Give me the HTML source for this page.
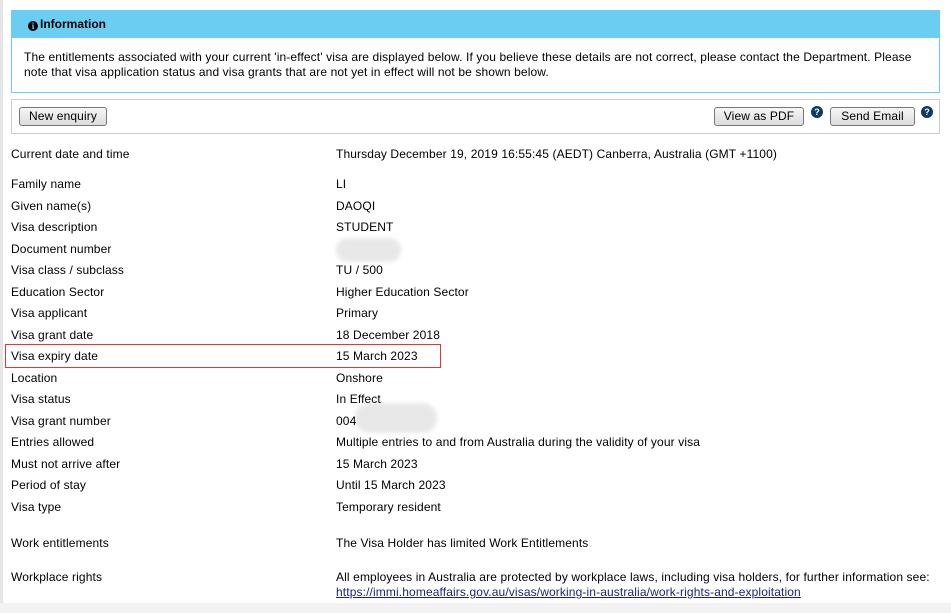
<!DOCTYPE html>
<html><head><meta charset="utf-8"><style>
*{margin:0;padding:0;box-sizing:border-box}
body{width:951px;height:613px;background:#fff;position:relative;overflow:hidden;font-family:"Liberation Sans",Arial,sans-serif;font-size:12px;color:#000;letter-spacing:0.12px}
.strip{position:absolute;left:0;top:0;width:3px;height:613px;background:#e6e6e6}
.bot{position:absolute;left:0;top:603px;width:951px;height:10px;background:#f2f2f2}
.info{position:absolute;left:11px;top:10px;width:929px;height:83px;border:1px solid #6ccdf3}
.ih{background:#6ccdf3;height:27px;font-weight:bold;padding:6px 0 0 16px;font-size:12px;letter-spacing:0}
.ih .i{display:inline-block;width:10px;height:10px;border-radius:50%;background:#000;color:#6ccdf3;font-size:9px;text-align:center;line-height:10px;font-family:"Liberation Serif",serif;margin-right:2px;vertical-align:-1px}
.ib{padding:12px 0 0 12px;line-height:15px}
.tb{position:absolute;left:11px;top:99px;width:929px;height:35px;border:1px solid #ccc}
.btn{position:absolute;top:107px;height:19px;border:1px solid #777;border-radius:3px;background:linear-gradient(#f6f6f6,#dcdcdc);text-align:center;line-height:16px;font-size:12px}
.q{position:absolute;top:106px;width:12px;height:12px;border-radius:50%;background:#0b3a66;color:#fff;font-size:9px;font-weight:bold;text-align:center;line-height:12px}
.l{position:absolute;left:11px}
.v{position:absolute;left:336px}
.red{position:absolute;left:5px;top:344px;width:436px;height:24px;border:1px solid #e53535}
.blur{position:absolute;background:#e8e8e8;border-radius:14px;filter:blur(2px)}
a{color:#1a237e;text-decoration:underline}
</style></head><body>
<div class="strip"></div>
<div class="info"><div class="ih"><span class="i">i</span>Information</div>
<div class="ib">The entitlements associated with your current 'in-effect' visa are displayed below. If you believe these details are not correct, please contact the Department. Please<br>note that visa application status and visa grants that are not yet in effect will not be shown below.</div></div>
<div class="tb"></div>
<div class="btn" style="left:19px;width:88px">New enquiry</div>
<div class="btn" style="left:714px;width:90px">View as PDF</div>
<div class="q" style="left:811px">?</div>
<div class="btn" style="left:830px;width:85px">Send Email</div>
<div class="q" style="left:921px">?</div>
<div class="red"></div>
<div class="blur" style="left:336px;top:238px;width:65px;height:24px"></div>
<div class="blur" style="left:355px;top:403px;width:82px;height:30px"></div>
<div class="l" style="top:147px">Current date and time</div><div class="v" style="top:147px">Thursday December 19, 2019 16:55:45 (AEDT) Canberra, Australia (GMT +1100)</div>
<div class="l" style="top:177px">Family name</div><div class="v" style="top:177px">LI</div>
<div class="l" style="top:199px">Given name(s)</div><div class="v" style="top:199px">DAOQI</div>
<div class="l" style="top:220px">Visa description</div><div class="v" style="top:220px">STUDENT</div>
<div class="l" style="top:242px">Document number</div>
<div class="l" style="top:263px">Visa class / subclass</div><div class="v" style="top:263px">TU / 500</div>
<div class="l" style="top:285px">Education Sector</div><div class="v" style="top:285px">Higher Education Sector</div>
<div class="l" style="top:306px">Visa applicant</div><div class="v" style="top:306px">Primary</div>
<div class="l" style="top:328px">Visa grant date</div><div class="v" style="top:328px">18 December 2018</div>
<div class="l" style="top:349px">Visa expiry date</div><div class="v" style="top:349px">15 March 2023</div>
<div class="l" style="top:371px">Location</div><div class="v" style="top:371px">Onshore</div>
<div class="l" style="top:392px">Visa status</div><div class="v" style="top:392px">In Effect</div>
<div class="l" style="top:414px">Visa grant number</div><div class="v" style="top:414px">004</div>
<div class="l" style="top:435px">Entries allowed</div><div class="v" style="top:435px">Multiple entries to and from Australia during the validity of your visa</div>
<div class="l" style="top:457px">Must not arrive after</div><div class="v" style="top:457px">15 March 2023</div>
<div class="l" style="top:478px">Period of stay</div><div class="v" style="top:478px">Until 15 March 2023</div>
<div class="l" style="top:500px">Visa type</div><div class="v" style="top:500px">Temporary resident</div>
<div class="l" style="top:536px">Work entitlements</div><div class="v" style="top:536px">The Visa Holder has limited Work Entitlements</div>
<div class="l" style="top:570px">Workplace rights</div><div class="v" style="top:570px;line-height:15px">All employees in Australia are protected by workplace laws, including visa holders, for further information see:<br><a>https://immi.homeaffairs.gov.au/visas/working-in-australia/work-rights-and-exploitation</a></div>
<div class="bot"></div>
</body></html>
